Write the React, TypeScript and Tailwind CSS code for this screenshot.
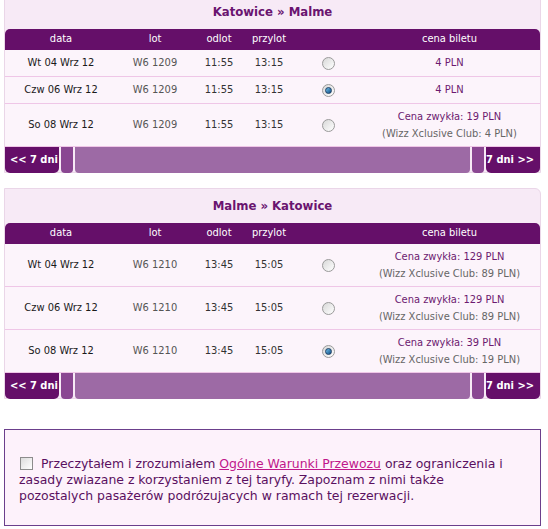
import React from "react"

type Row = {
    date: string
    flight: string
    dep: string
    arr: string
    selected: boolean
    price?: string
    normal?: string
    club?: string
}

const outbound: Row[] = [
    { date: "Wt 04 Wrz 12", flight: "W6 1209", dep: "11:55", arr: "13:15", selected: false, price: "4 PLN" },
    { date: "Czw 06 Wrz 12", flight: "W6 1209", dep: "11:55", arr: "13:15", selected: true, price: "4 PLN" },
    { date: "So 08 Wrz 12", flight: "W6 1209", dep: "11:55", arr: "13:15", selected: false, normal: "19 PLN", club: "4 PLN" },
]

const inbound: Row[] = [
    { date: "Wt 04 Wrz 12", flight: "W6 1210", dep: "13:45", arr: "15:05", selected: false, normal: "129 PLN", club: "89 PLN" },
    { date: "Czw 06 Wrz 12", flight: "W6 1210", dep: "13:45", arr: "15:05", selected: false, normal: "129 PLN", club: "89 PLN" },
    { date: "So 08 Wrz 12", flight: "W6 1210", dep: "13:45", arr: "15:05", selected: true, normal: "39 PLN", club: "19 PLN" },
]

const cols = "grid grid-cols-[112px_76px_52px_52px_62px_1fr]"

const Radio = ({ checked }: { checked: boolean }) => (
    <div className="w-[13px] h-[13px] rounded-full border border-[#9a9a9a] bg-gradient-to-br from-[#d8d8d8] to-[#ffffff] flex items-center justify-center">
        {checked && <div className="w-[7px] h-[7px] rounded-full bg-gradient-to-br from-[#6fc0ea] to-[#0d4f86] border border-[#1d3d63]" />}
    </div>
)

const Panel = ({ title, rows, className }: { title: string, rows: Row[], className?: string }) => {
    return (
        <div className={`mx-[4px] w-[537px] bg-[#f7eaf6] border border-[#ead6e8] rounded-tr-[6px] ${className ?? ""}`}>
            <div className="h-[34px] flex items-end justify-center pb-[8px] text-[13px] font-bold text-[#6a1470]">
                {title}
            </div>
            <div className={`${cols} h-[21px] items-center bg-[#650f69] rounded-t-[5px] text-white text-[11px] text-center`}>
                <div>data</div>
                <div>lot</div>
                <div>odlot</div>
                <div className="-ml-[4px]">przylot</div>
                <div></div>
                <div>cena biletu</div>
            </div>
            {rows.map((r, i) => {
                const tall = !!r.normal
                return (
                    <div key={i} className={`${cols} ${tall ? "h-[43px]" : "h-[27px]"} items-center bg-[#fcf4fb] border-b border-[#efc6e7] text-[11px] text-center`}>
                        <div className="text-[#1a1a1a]">{r.date}</div>
                        <div className="text-[#555555]">{r.flight}</div>
                        <div className="text-[#333333]">{r.dep}</div>
                        <div className="text-[#333333] -ml-[4px]">{r.arr}</div>
                        <div className="flex justify-center"><Radio checked={r.selected} /></div>
                        {r.price ? (
                            <div className="text-[#6c1a70]">{r.price}</div>
                        ) : (
                            <div className="leading-[17px]">
                                <div className="text-[#6c1a70]">Cena zwykła: {r.normal}</div>
                                <div className="text-[#666666]">(Wizz Xclusive Club: {r.club})</div>
                            </div>
                        )}
                    </div>
                )
            })}
            <div className="flex h-[26px] gap-[2px] -mb-px">
                <div className="w-[54px] bg-[#650f69] rounded-b-[5px] text-white text-[11px] font-bold flex items-center pl-[5px]">
                    &lt;&lt; 7 dni
                </div>
                <div className="w-[12px] bg-[#8a4792] rounded-b-[4px]" />
                <div className="flex-1 bg-[#9d6aa5] rounded-b-[4px]" />
                <div className="w-[12px] bg-[#8a4792] rounded-b-[4px]" />
                <div className="w-[54px] bg-[#650f69] rounded-b-[5px] text-white text-[11px] font-bold flex items-center justify-end pr-[6px]">
                    7 dni &gt;&gt;
                </div>
            </div>
        </div>
    )
}

const App = () => {
    return (
        <div className="w-[548px] h-[529px] bg-white overflow-hidden" style={{ fontFamily: "Tahoma, 'DejaVu Sans Condensed', 'DejaVu Sans', sans-serif" }}>
            <Panel title="Katowice » Malme" rows={outbound} className="-mt-[6px]" />
            <Panel title="Malme » Katowice" rows={inbound} className="mt-[15px]" />
            <div className="mx-[4px] mt-[30px] w-[537px] h-[97px] border border-[#6b3f8c] bg-[#fdf2fb] pl-[14px] pr-[20px] pt-[26px] text-[12.45px] leading-[16px] text-[#5a1060]" style={{ fontFamily: "Verdana, 'DejaVu Sans', sans-serif" }}>
                <span className="inline-block align-[-2px] w-[13px] h-[13px] border border-[#8c8c8c] bg-gradient-to-br from-[#dcdcdc] to-[#ffffff] mr-[8px] ml-[1px]" />
                Przeczytałem i zrozumiałem <a className="text-[#c0178a] underline" href="#">Ogólne Warunki Przewozu</a> oraz ograniczenia i zasady zwiazane z korzystaniem z tej taryfy. Zapoznam z nimi także pozostalych pasażerów podrózujacych w ramach tej rezerwacji.
            </div>
        </div>
    )
}

export default App
